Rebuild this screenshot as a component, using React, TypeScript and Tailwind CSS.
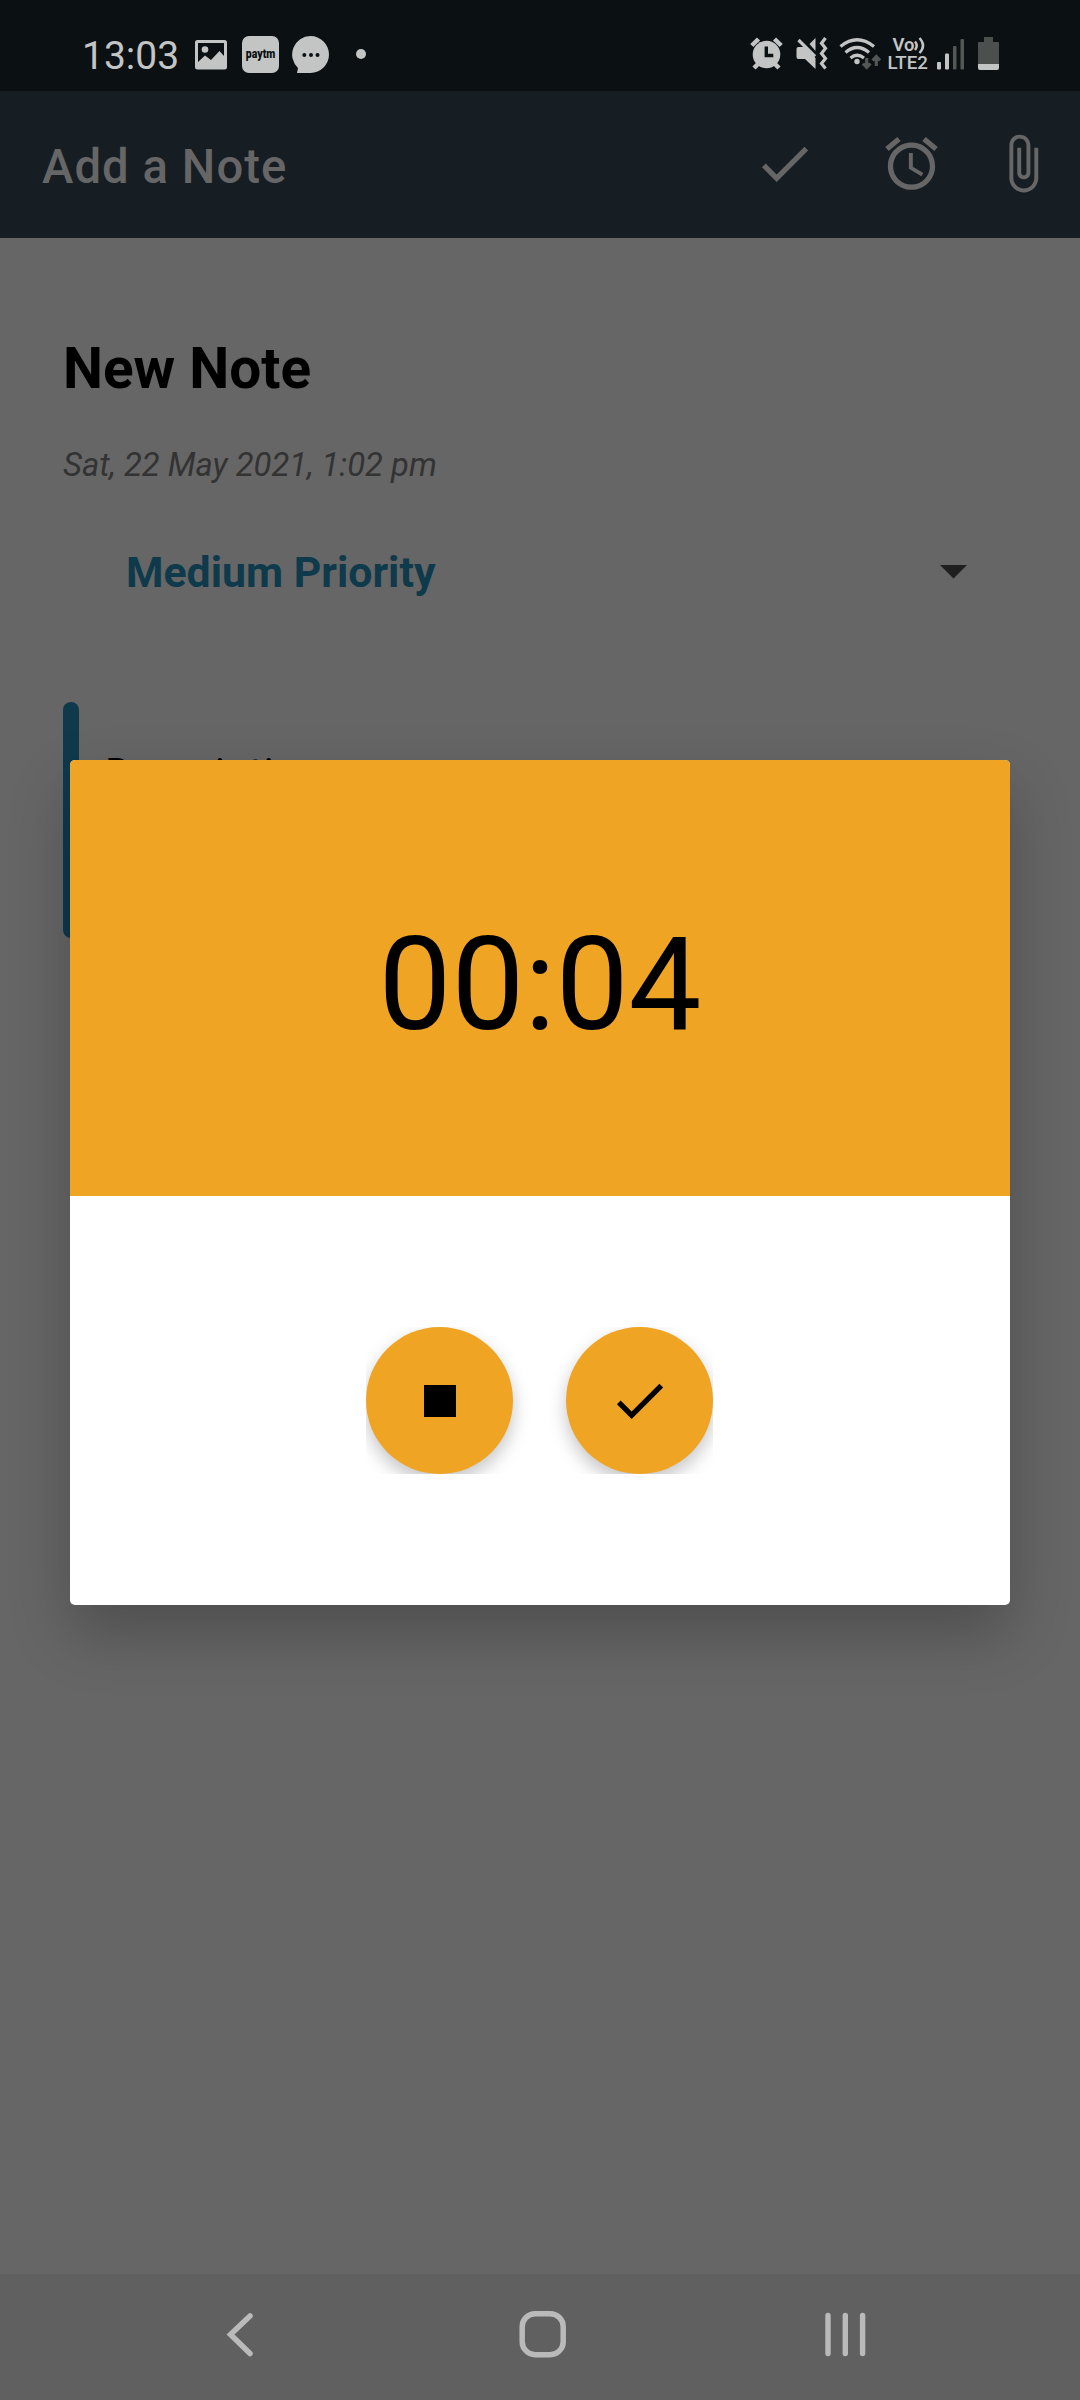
import React from "react";

const CHECK = "M9 16.17 4.83 12l-1.42 1.41L9 19 21 7l-1.41-1.41z";
const ALARM =
  "M22 5.72l-4.6-3.86-1.29 1.53 4.6 3.86L22 5.72zM7.88 3.39L6.6 1.86 2 5.71l1.29 1.53 4.59-3.85zM12.5 8H11v6l4.75 2.85.75-1.23-4-2.37V8zM12 4c-4.97 0-9 4.03-9 9s4.02 9 9 9c4.97 0 9-4.03 9-9s-4.03-9-9-9zm0 16c-3.87 0-7-3.13-7-7s3.13-7 7-7 7 3.13 7 7-3.13 7-7 7z";
const ATTACH =
  "M16.5 6v11.5c0 2.21-1.79 4-4 4s-4-1.79-4-4V5c0-1.38 1.12-2.5 2.5-2.5s2.5 1.12 2.5 2.5v10.5c0 .55-.45 1-1 1s-1-.45-1-1V6H10v9.5c0 1.38 1.12 2.5 2.5 2.5s2.5-1.12 2.5-2.5V5c0-2.21-1.79-4-4-4S7 2.79 7 5v12.5c0 3.04 2.46 5.5 5.5 5.5s5.5-2.46 5.5-5.5V6h-1.5z";

function Icon({ d, className = "" }: { d: string; className?: string }) {
  return (
    <svg viewBox="0 0 24 24" className={`size-[63px] shrink-0 fill-current ${className}`}>
      <path d={d} />
    </svg>
  );
}

function StatusBar() {
  return (
    <div className="flex h-[91px] items-start bg-[#0b1013] pl-[82px] text-[#c3c5c5]">
      <span className="mt-[32px] w-[113px] text-[39px] leading-[48px]">13:03</span>
      <svg viewBox="0 0 32 30" className="mt-[40px] h-[30px] w-[32px] fill-current">
        <path
          fillRule="evenodd"
          d="M2.5 0h27Q32 0 32 2.500v24.500Q32 29.500 29.500 29.500h-27Q0 29.500 0 27V2.500Q0 0 2.500 0zM3 3v19l7-6.500 6 4.500 8.500-9 4.500 5V3z"
        />
        <circle cx="10" cy="9.500" r="3.300" />
      </svg>
      <div className="mt-[36px] ml-[15px] flex h-[37px] w-[37px] items-center justify-center rounded-[7px] bg-[#c3c5c5]">
        <span className="scale-x-[0.84] text-[12.500px] leading-none font-black text-[#0b1013]">paytm</span>
      </div>
      <svg viewBox="0 0 37 37" className="mt-[36px] ml-[13px] size-[37px]">
        <path className="fill-current" d="M18.500 0a18.500 18.500 0 0 1 0 37H5l1-5A18.500 18.500 0 0 1 18.500 0z" />
        <g fill="#0b1013">
          <circle cx="12.300" cy="19" r="2" />
          <circle cx="19" cy="19" r="2" />
          <circle cx="25.500" cy="19" r="2" />
        </g>
      </svg>
      <span className="mt-[49px] ml-[27px] size-[10px] rounded-full bg-current" />

      <svg viewBox="0 0 33 33" className="mt-[37px] ml-[384px] size-[33px]">
        <g stroke="currentColor" strokeWidth="4.500">
          <path d="M1.800 8.500 8.500 2M31.200 8.500 24.500 2M4 31l5-5M29 31l-5-5" />
        </g>
        <circle cx="16.500" cy="17.500" r="13.800" className="fill-current" />
        <path d="M16.300 9.500v9h7" fill="none" stroke="#0b1013" strokeWidth="3.400" />
      </svg>
      <svg viewBox="0 0 33 33" className="mt-[37px] ml-[12px] size-[33px]">
        <path className="fill-current" d="M1.500 12Q1.500 10 3.500 10H9L20.500 21V32L10 22H3.500Q1.500 22 1.500 20zM14.500 7 20.500 1V14z" />
        <path d="M3.500 3 20 19.500" stroke="currentColor" strokeWidth="3.200" />
        <path d="M30.500 1l-4 5.200 4 5-4 5.200 4 5-4 5.200 4 5" fill="none" stroke="currentColor" strokeWidth="3.200" />
      </svg>
      <svg viewBox="0 0 43 33" className="mt-[37px] ml-[11px] h-[33px] w-[43px]">
        <g fill="none" stroke="currentColor" strokeWidth="3.200">
          <path d="M1.500 9.500Q18 -4 35 9.500" />
          <path d="M6.500 15.500Q18 5.500 30 15.500" />
          <path d="M11.500 21Q18 15.500 25 21" />
        </g>
        <circle cx="18" cy="24.500" r="2.700" className="fill-current" />
        <path
          d="M27.700 21v9M24 26.500l3.700 4 3.700-4M37.300 29v-9M33.600 23.500l3.700-4 3.700 4"
          fill="none"
          stroke="#535756"
          strokeWidth="3.200"
        />
      </svg>
      <div className="mt-[37px] ml-[5.500px] flex h-[34px] w-[42px] flex-col">
        <div className="flex h-[16px] items-center pl-[5px]">
          <span className="w-[21px] text-[18.500px] leading-[16px] font-semibold">Vo</span>
          <svg viewBox="0 0 11 17" className="h-[17px] w-[11px]">
            <path d="M1 4.500q3.500 4 0 8.500M5.500 1q7 7.500 0 15" fill="none" stroke="currentColor" strokeWidth="2.500" />
          </svg>
        </div>
        <span className="text-[18.700px] leading-[20px] font-medium">LTE2</span>
      </div>
      <svg viewBox="0 0 28 31" className="mt-[39px] ml-[7.500px] h-[31px] w-[28px]">
        <rect x="0" y="23" width="4" height="7.500" rx="1" className="fill-current" />
        <rect x="8" y="14.500" width="4" height="16" rx="1" className="fill-current" />
        <rect x="16" y="7" width="3.500" height="23.500" rx="1" fill="#535756" />
        <rect x="23.500" y="0" width="3.500" height="30.500" rx="1" fill="#535756" />
      </svg>
      <svg viewBox="0 0 21 33" className="mt-[37px] ml-[13px] h-[33px] w-[21px]">
        <path d="M6 0h9v5h5q1 0 1 1v21H0V6q0-1 1-1h5z" fill="#4b504f" />
        <path d="M0 27h21v4q0 2-2 2H2q-2 0-2-2z" className="fill-current" />
      </svg>
    </div>
  );
}

function Toolbar() {
  return (
    <div className="flex h-[147px] items-start bg-[#161d23] pt-[41px] text-[#666]">
      <h1 className="ml-[42px] w-[711px] pt-[3px] text-[47.250px] leading-[64px] font-medium tracking-[1.050px]">
        Add a Note
      </h1>
      <Icon d={CHECK} />
      <Icon d={ALARM} className="ml-[64px]" />
      <Icon d={ATTACH} className="ml-[48px]" />
    </div>
  );
}

function NoteForm() {
  return (
    <div className="flex h-[2036px] flex-col px-[63px]">
      <h2 className="mt-[99px] text-[56.700px] leading-[64px] font-bold text-black">New Note</h2>
      <p className="mt-[44px] text-[32.800px] leading-[40px] text-[#333] italic">Sat, 22 May 2021, 1:02 pm</p>
      <div className="mt-[62px] flex h-[50px] items-center justify-between pr-[50px] pl-[63px]">
        <span className="text-[42.800px] leading-[50px] font-bold text-[#0e3a4c]">Medium Priority</span>
        <svg viewBox="0 0 27 14" className="h-[14px] w-[27px] fill-[#1f1f1f]">
          <path d="M0 0h27L13.500 13.500z" />
        </svg>
      </div>
      <div className="mt-[105px] flex h-[236px]">
        <span className="w-[16px] rounded-[8px] bg-[#0e3a4c]" />
        <p className="mt-[47px] ml-[26px] text-[42px] leading-[50px] tracking-[0.400px] text-black">Description</p>
      </div>
    </div>
  );
}

function RecorderDialog() {
  return (
    <div className="absolute top-[760px] left-[70px] flex h-[845px] w-[940px] flex-col overflow-hidden rounded-[5px] bg-white text-black">
      <div className="flex h-[436px] items-center justify-center bg-[#efa424] pt-[16px]">
        <span className="text-[129.700px] leading-none">00:04</span>
      </div>
      <div className="flex flex-1 items-start pt-[131px] pl-[296px]">
        <div className="flex h-[147px] gap-[53px] overflow-hidden">
          <button className="flex size-[147px] items-center justify-center rounded-full bg-[#efa424] shadow-[0_8px_18px_rgba(0,0,0,0.23)]">
            <span className="size-[32px] bg-black" />
          </button>
          <button className="flex size-[147px] items-center justify-center rounded-full bg-[#efa424] shadow-[0_8px_18px_rgba(0,0,0,0.23)]">
            <Icon d={CHECK} />
          </button>
        </div>
      </div>
    </div>
  );
}

function NavBar() {
  return (
    <div className="flex h-[126px] items-start bg-[#606060] pt-[36px] text-[#bababa]">
      <svg viewBox="0 0 30 50" className="ml-[226px] h-[50px] w-[30px]">
        <path d="M24 6 4.500 24.500 24 43.500" fill="none" stroke="currentColor" strokeWidth="5.500" strokeLinecap="round" />
      </svg>
      <svg viewBox="0 0 48 50" className="ml-[263px] h-[50px] w-[48px]">
        <rect x="3.200" y="3.700" width="41" height="41" rx="13" fill="none" stroke="currentColor" strokeWidth="5.500" />
      </svg>
      <svg viewBox="0 0 42 50" className="ml-[258px] h-[50px] w-[42px]">
        <path d="M3 5.500v38M20.300 5.500v38M37.600 5.500v38" stroke="currentColor" strokeWidth="5.400" strokeLinecap="round" />
      </svg>
    </div>
  );
}

export default function App() {
  return (
    <div className="relative h-[2400px] w-[1080px] overflow-hidden bg-[#666] font-[Roboto,sans-serif]">
      <StatusBar />
      <Toolbar />
      <NoteForm />
      <NavBar />
      <div className="absolute top-[760px] left-[70px] h-[845px] w-[940px] rounded-[5px] shadow-[0_28px_62px_rgba(0,0,0,0.24)]" />
      <RecorderDialog />
    </div>
  );
}
